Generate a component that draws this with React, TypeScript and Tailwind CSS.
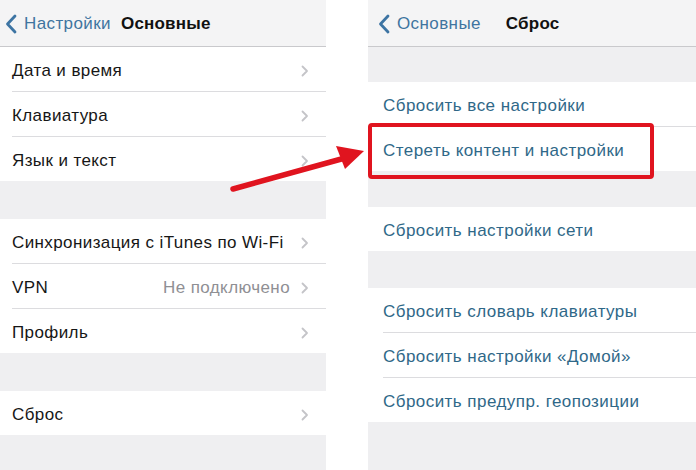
import React from "react";

const font = { fontFamily: '"Liberation Sans", Arial, sans-serif' };

function Chevron() {
  return (
    <svg width="8" height="12" viewBox="0 0 8 12" className="shrink-0">
      <path d="M1.5 1.5 L6 6 L1.5 10.5" fill="none" stroke="#c4c4c8" strokeWidth="1.8" strokeLinecap="round" strokeLinejoin="round" />
    </svg>
  );
}

function BackChevron() {
  return (
    <svg width="12" height="20" viewBox="0 0 12 20" className="shrink-0">
      <path d="M10 2 L2.5 10 L10 18" fill="none" stroke="#3d74a3" strokeWidth="2.8" strokeLinecap="round" strokeLinejoin="round" />
    </svg>
  );
}

function LeftRow({ label, value, sep = true }: { label: string; value?: string; sep?: boolean }) {
  return (
    <div className="relative bg-white">
      <div className="h-[44px] flex items-center pl-[12px] pr-[17px] pt-[3px]">
        <span className="flex-1 text-[17px] tracking-[0.4px] text-[#161616] whitespace-nowrap">{label}</span>
        {value && <span className="mr-[11px] text-[17px] tracking-[0.4px] text-[#8f8f94]">{value}</span>}
        <Chevron />
      </div>
      {sep && <div className="ml-[12px] h-px bg-[#dcdcdf]" />}
    </div>
  );
}

function RightRow({ label, sep = true }: { label: string; sep?: boolean }) {
  return (
    <div className="bg-white">
      <div className="h-[44px] flex items-center pl-[15px] pt-[3px]">
        <span className="text-[17px] tracking-[0.45px] text-[#2f6888] whitespace-nowrap">{label}</span>
      </div>
      {sep && <div className="ml-[15px] h-px bg-[#dcdcdf]" />}
    </div>
  );
}

export default function App() {
  return (
    <div className="relative w-[696px] h-[470px] overflow-hidden bg-white" style={font}>
      <div className="flex h-full gap-[42px]">
        {/* Left panel */}
        <div className="w-[326px] flex flex-col">
          <div className="h-[46px] bg-[#f4f4f5] flex items-center pl-[5px] pt-[2px]">
            <BackChevron />
            <span className="ml-[7px] text-[17px] tracking-[0.4px] text-[#3f74a0]">Настройки</span>
            <span className="ml-[10px] text-[17px] tracking-[0.2px] font-semibold text-[#111]">Основные</span>
          </div>
          <div className="h-px bg-[#c9c9cc]" />
          <LeftRow label="Дата и время" />
          <LeftRow label="Клавиатура" />
          <LeftRow label="Язык и текст" sep={false} />
          <div className="h-[38px] bg-[#efeff1]" />
          <LeftRow label="Синхронизация с iTunes по Wi-Fi" />
          <LeftRow label="VPN" value="Не подключено" />
          <LeftRow label="Профиль" sep={false} />
          <div className="h-[38px] bg-[#efeff1]" />
          <LeftRow label="Сброс" sep={false} />
          <div className="flex-1 bg-[#efeff1]" />
        </div>

        {/* Right panel */}
        <div className="flex-1 flex flex-col">
          <div className="h-[46px] bg-[#f4f4f5] flex items-center pl-[10px] pt-[2px]">
            <BackChevron />
            <span className="ml-[7px] text-[17px] tracking-[0.4px] text-[#3f74a0]">Основные</span>
            <span className="ml-[25px] text-[17px] tracking-[0.2px] font-semibold text-[#111]">Сброс</span>
          </div>
          <div className="h-px bg-[#c9c9cc]" />
          <div className="h-[35px] bg-[#efeff1]" />
          <RightRow label="Сбросить все настройки" />
          <RightRow label="Стереть контент и настройки" sep={false} />
          <div className="h-[36px] bg-[#efeff1]" />
          <RightRow label="Сбросить настройки сети" sep={false} />
          <div className="h-[37px] bg-[#efeff1]" />
          <RightRow label="Сбросить словарь клавиатуры" />
          <RightRow label="Сбросить настройки «Домой»" />
          <RightRow label="Сбросить предупр. геопозиции" sep={false} />
          <div className="flex-1 bg-[#efeff1]" />
        </div>
      </div>

      {/* Red highlight box */}
      <div className="absolute left-[368px] top-[123px] w-[286px] h-[56px] border-[4px] border-[#e0141f] rounded-[4px]" />

      {/* Red arrow */}
      <svg className="absolute left-0 top-0 pointer-events-none" width="696" height="470" viewBox="0 0 696 470">
        <line x1="233" y1="189" x2="345" y2="158" stroke="#e0141f" strokeWidth="5.5" strokeLinecap="round" />
        <polygon points="364,151 336,146 345,169" fill="#e0141f" />
      </svg>
    </div>
  );
}
